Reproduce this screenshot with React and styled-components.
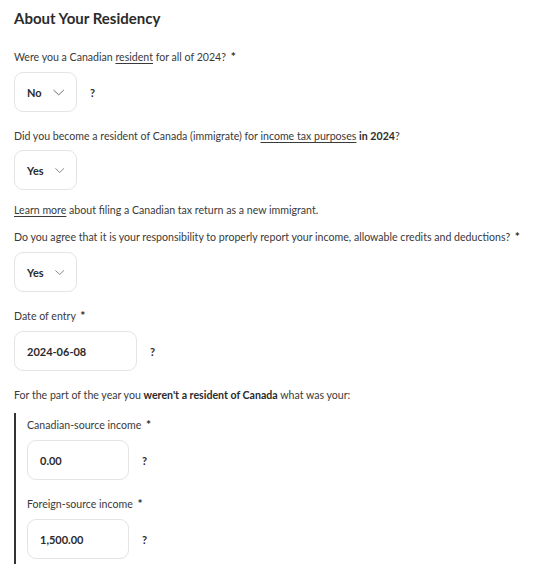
import styled, { createGlobalStyle } from "styled-components";

const GlobalStyle = createGlobalStyle`
  body {
    margin: 0;
    background: #ffffff;
    font-family: "Lato", "Noto Sans", sans-serif;
    color: #3a3a3a;
  }
`;

const Page = styled.div`
  padding: 8px 14px 0 14px;
  display: flex;
  flex-direction: column;
`;

const Title = styled.h2`
  margin: 0 0 21px 0;
  font-size: 15px;
  font-weight: 700;
  color: #2b2b2b;
  line-height: 20px;
`;

const Field = styled.div`
  display: flex;
  flex-direction: column;
  margin-bottom: ${(p) => (p.$gap === undefined ? 16 : p.$gap)}px;
`;

const Label = styled.div`
  font-size: 10.6px;
  line-height: 16px;
  margin-bottom: ${(p) => p.$after || 7}px;
  white-space: nowrap;

  u {
    text-decoration: underline;
    text-underline-offset: 2px;
  }

  b {
    font-weight: 700;
    color: #2b2b2b;
  }
`;

const Req = styled.span`
  font-weight: 700;
  font-size: 12px;
  color: #2b2b2b;
  margin-left: 2px;
`;

const Row = styled.div`
  display: flex;
  align-items: center;
  gap: 13px;
`;

const Box = styled.div`
  display: flex;
  align-items: center;
  gap: 11px;
  box-sizing: border-box;
  height: 40px;
  width: ${(p) => p.$width}px;
  padding: 0 12px;
  border: 1px solid #e4e4e4;
  border-radius: 9px;
  font-size: 11px;
  font-weight: 700;
  color: #2b2b2b;
`;

const Help = styled.span`
  font-size: 11px;
  font-weight: 700;
  color: #2b2b2b;
`;

const Note = styled.div`
  font-size: 10.6px;
  line-height: 16px;
  margin-bottom: 11px;

  u {
    text-decoration: underline;
    text-underline-offset: 2px;
  }
`;

const Group = styled.div`
  border-left: 2px solid #333333;
  padding: 4px 0 0 11px;
  display: flex;
  flex-direction: column;
`;

const Chevron = () => (
  <svg width="12" height="7" viewBox="0 0 12 7" fill="none">
    <path d="M0.5 0.8l5.5 5.2L11.5 0.8" stroke="#666" strokeWidth="1" />
  </svg>
);

function Select({ value, width = 63, help }) {
  return (
    <Row>
      <Box $width={width}>
        {value}
        <Chevron />
      </Box>
      {help && <Help>?</Help>}
    </Row>
  );
}

function Input({ value, width, help }) {
  return (
    <Row>
      <Box $width={width}>{value}</Box>
      {help && <Help>?</Help>}
    </Row>
  );
}

export default function App() {
  return (
    <>
      <GlobalStyle />
      <Page>
        <Title>About Your Residency</Title>

        <Field $gap={16}>
          <Label>
            Were you a Canadian <u>resident</u> for all of 2024? <Req>*</Req>
          </Label>
          <Select value="No" help />
        </Field>

        <Field $gap={12}>
          <Label $after={6}>
            Did you become a resident of Canada (immigrate) for{" "}
            <u>income tax purposes</u> <b>in 2024</b>?
          </Label>
          <Select value="Yes" />
        </Field>

        <Note>
          <u>Learn more</u> about filing a Canadian tax return as a new immigrant.
        </Note>

        <Field>
          <Label>
            Do you agree that it is your responsibility to properly report your
            income, allowable credits and deductions? <Req>*</Req>
          </Label>
          <Select value="Yes" />
        </Field>

        <Field $gap={16}>
          <Label>
            Date of entry <Req>*</Req>
          </Label>
          <Input value="2024-06-08" width={123} help />
        </Field>

        <Label $after={10}>
          For the part of the year you <b>weren't a resident of Canada</b> what
          was your:
        </Label>

        <Group>
          <Field>
            <Label>
              Canadian-source income <Req>*</Req>
            </Label>
            <Input value="0.00" width={102} help />
          </Field>
          <Field $gap={8}>
            <Label>
              Foreign-source income <Req>*</Req>
            </Label>
            <Input value="1,500.00" width={102} help />
          </Field>
        </Group>
      </Page>
    </>
  );
}
